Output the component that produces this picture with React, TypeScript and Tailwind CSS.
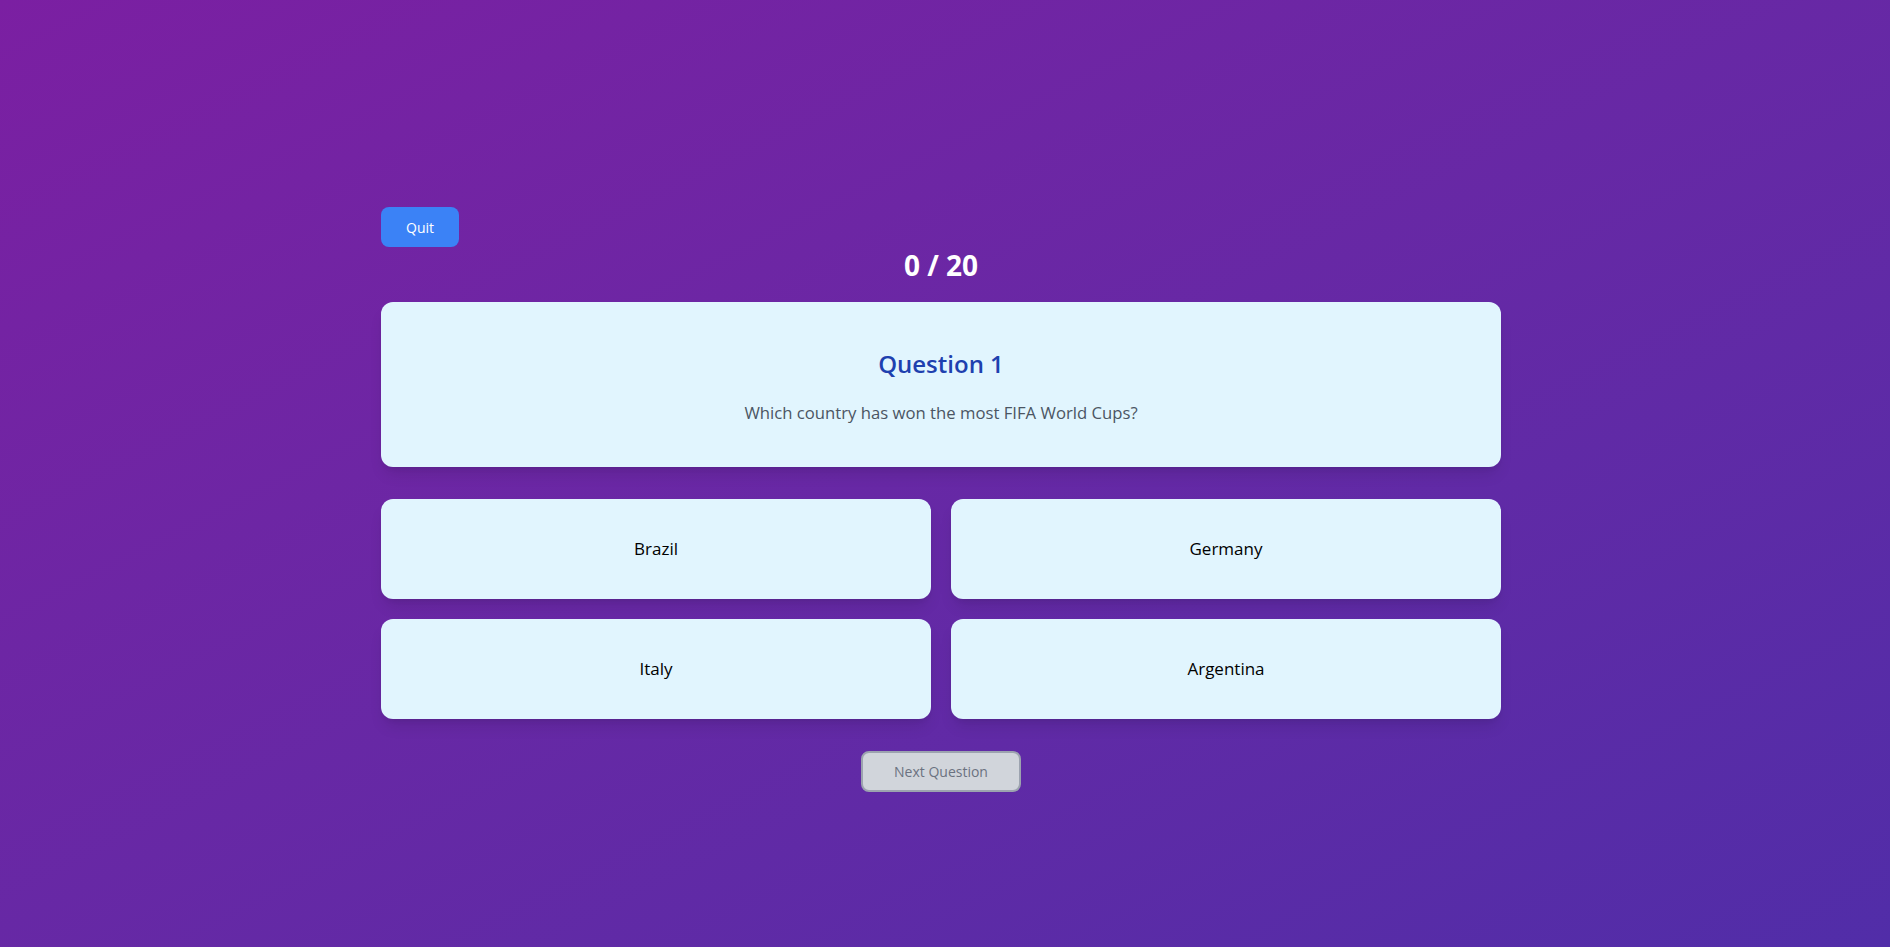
import React, { useState } from 'react';

const answers = ['Brazil', 'Germany', 'Italy', 'Argentina'];

export default function App() {
  const [picked, setPicked] = useState<string | null>(null);

  return (
    <div
      className="min-h-screen w-full bg-gradient-to-br from-[#7b1fa2] to-[#512da8] pt-[207px] pr-2"
      style={{ fontFamily: '"Open Sans", sans-serif' }}
    >
      <div className="mx-auto w-[1120px]">
        <button className="h-[40px] w-[78px] rounded-lg bg-[#3b82f6] text-[14px] text-white">
          Quit
        </button>

        <div className="h-[37px] text-center text-[28px] font-bold leading-[37px] text-white">
          0 / 20
        </div>

        <div className="mt-[18px] rounded-xl bg-[#e1f5fe] pt-[46px] pb-[42px] text-center shadow-lg">
          <h2 className="text-2xl font-semibold leading-8 text-[#1e40af]">Question 1</h2>
          <p className="mt-[21px] text-[16.7px] leading-6 text-[#4b5563]">
            Which country has won the most FIFA World Cups?
          </p>
        </div>

        <div className="mt-8 grid grid-cols-2 gap-5">
          {answers.map((a) => (
            <button
              key={a}
              onClick={() => setPicked(a)}
              className="h-[100px] rounded-xl bg-[#e1f5fe] text-[17px] text-black shadow-lg"
            >
              {a}
            </button>
          ))}
        </div>

        <div className="mt-8 flex justify-center">
          <button
            disabled={!picked}
            className="h-[41px] w-[160px] rounded-lg border-2 border-[#9ca3af] bg-[#d1d5db] text-[14px] text-[#6b7280]"
          >
            Next Question
          </button>
        </div>
      </div>
    </div>
  );
}
